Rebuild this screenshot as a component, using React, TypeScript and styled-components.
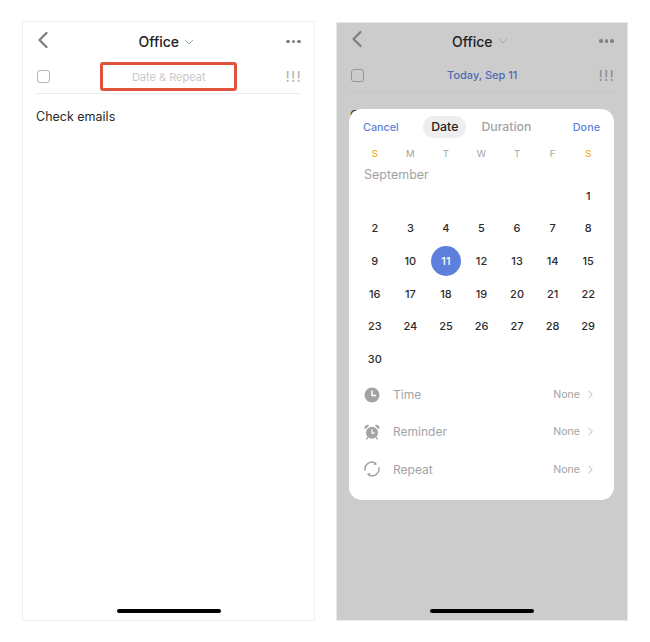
import React from 'react';
import styled, { createGlobalStyle } from 'styled-components';
import { ChevronLeft, ChevronDown, ChevronRight } from 'lucide-react';

const weekdays = ['S', 'M', 'T', 'W', 'T', 'F', 'S'];
const days: (number | null)[] = [
  null, null, null, null, null, null, 1,
  ...Array.from({ length: 29 }, (_, i) => i + 2),
];

const GlobalStyle = createGlobalStyle`
  html, body {
    margin: 0;
    background: #fff;
    font-family: Inter, "Liberation Sans", sans-serif;
  }
`;

function ClockIcon() {
  return (
    <svg width="16" height="16" viewBox="0 0 16 16">
      <circle cx="8" cy="8" r="7.5" fill="#a3a3a3" />
      <path d="M8 3.6V8.4H12" fill="none" stroke="#fff" strokeWidth="1.5" />
    </svg>
  );
}

function AlarmIcon() {
  return (
    <svg width="16" height="16" viewBox="0 0 16 16">
      <circle cx="8" cy="8.8" r="6" fill="#a3a3a3" />
      <path d="M8 5.4V9.2H10.8" fill="none" stroke="#fff" strokeWidth="1.3" />
      <path d="M0.4 4.6C0.2 2.4 2 0.4 4.4 0.8L5 1.8 1.2 5.2Z M15.6 4.6C15.8 2.4 14 0.4 11.6 0.8L11 1.8 14.8 5.2Z" fill="#a3a3a3" />
      <path d="M3.8 13.2 2.6 15.4M12.2 13.2 13.4 15.4" stroke="#a3a3a3" strokeWidth="1.4" />
    </svg>
  );
}

function RepeatIcon() {
  return (
    <svg width="16" height="16" viewBox="0 0 16 16" fill="none">
      <path d="M1.2 9.8A6.9 6.9 0 0 1 11.2 2" stroke="#a3a3a3" strokeWidth="1.5" />
      <path d="M14.8 6.2A6.9 6.9 0 0 1 4.8 14" stroke="#a3a3a3" strokeWidth="1.5" />
      <path d="M10.4 0.4 13.2 3.2 9.8 4.2Z M5.6 15.6 2.8 12.8 6.2 11.8Z" fill="#a3a3a3" />
    </svg>
  );
}

function Header() {
  return (
    <TopBar>
      <BackButton>
        <ChevronLeft size={28} strokeWidth={2} />
      </BackButton>
      <Title>
        Office
        <ChevronDown size={16} strokeWidth={1.4} />
      </Title>
      <Dots>
        <i />
        <i />
        <i />
      </Dots>
    </TopBar>
  );
}

function TaskRow({ children }: { children: React.ReactNode }) {
  return (
    <Row>
      <Checkbox />
      {children}
      <Priority>!!!</Priority>
    </Row>
  );
}

const settings = [
  { label: 'Time', icon: <ClockIcon /> },
  { label: 'Reminder', icon: <AlarmIcon /> },
  { label: 'Repeat', icon: <RepeatIcon /> },
];

export default function App() {
  return (
    <Page>
      <GlobalStyle />
      <Phone>
        <Header />
        <TaskRow>
          <DatePlaceholder>Date &amp; Repeat</DatePlaceholder>
        </TaskRow>
        <TaskText>Check emails</TaskText>
        <HomeBar />
      </Phone>
      <Phone $dimmed>
        <Header />
        <TaskRow>
          <DateValue>Today, Sep 11</DateValue>
        </TaskRow>
        <TaskText>Check emails</TaskText>
        <HomeBar />
        <Sheet>
          <SheetHeader>
            <HeaderLink>Cancel</HeaderLink>
            <Tabs>
              <Tab $active>Date</Tab>
              <Tab>Duration</Tab>
            </Tabs>
            <HeaderLink>Done</HeaderLink>
          </SheetHeader>
          <Weekdays>
            {weekdays.map((d, i) => (
              <Weekday key={i} $weekend={i === 0 || i === 6}>
                {d}
              </Weekday>
            ))}
          </Weekdays>
          <Month>September</Month>
          <Days>
            {days.map((d, i) => (
              <Day key={i}>{d && (d === 11 ? <Selected>{d}</Selected> : d)}</Day>
            ))}
          </Days>
          <Settings>
            {settings.map(s => (
              <Setting key={s.label}>
                <SettingIcon>{s.icon}</SettingIcon>
                <SettingLabel>{s.label}</SettingLabel>
                <SettingValue>None</SettingValue>
                <ChevronRight size={13} strokeWidth={1.6} color="#a8a8a8" />
              </Setting>
            ))}
          </Settings>
        </Sheet>
      </Phone>
    </Page>
  );
}

const Page = styled.div`
  display: flex;
  align-items: center;
  gap: 21px;
  width: 650px;
  height: 642px;
  padding-left: 22px;
  box-sizing: border-box;
`;

const Phone = styled.div<{ $dimmed?: boolean }>`
  position: relative;
  display: flex;
  flex-direction: column;
  box-sizing: border-box;
  overflow: hidden;
  width: ${p => (p.$dimmed ? '292px' : '293px')};
  height: ${p => (p.$dimmed ? '599px' : '600px')};
  padding: 0 13px;
  background: ${p => (p.$dimmed ? '#cccccc' : '#fff')};
  border: 1px solid ${p => (p.$dimmed ? '#e8e8e8' : '#efefef')};
`;

const TopBar = styled.div`
  display: flex;
  align-items: center;
  justify-content: space-between;
  height: 37px;
  padding-top: 1px;
  box-sizing: content-box;
  ${Phone}:last-child & {
    margin-top: -1px;
  }
`;

const BackButton = styled.div`
  display: flex;
  margin-left: -7px;
  margin-top: -4px;
  color: #808080;
`;

const Title = styled.div`
  display: flex;
  align-items: center;
  gap: 2px;
  margin-left: -8px;
  font-size: 14px;
  font-weight: 500;
  color: #222;
  svg {
    color: #a3a3a3;
  }
`;

const Dots = styled.div`
  display: flex;
  gap: 2px;
  i {
    width: 3.5px;
    height: 3.5px;
    border-radius: 50%;
    background: #808080;
  }
`;

const Row = styled.div`
  display: flex;
  align-items: center;
  justify-content: space-between;
  height: 33px;
  border-bottom: 1px solid #ececec;
  ${Phone}:last-child & {
    padding-bottom: 1px;
    box-sizing: border-box;
    border-bottom-color: #c4c4c4;
  }
`;

const Checkbox = styled.div`
  width: 13px;
  height: 13px;
  box-sizing: border-box;
  margin-left: 1px;
  border: 1.3px solid #b4b4b4;
  border-radius: 3px;
  ${Phone}:last-child & {
    border-color: #969696;
  }
`;

const Priority = styled.div`
  margin-right: -1px;
  font-size: 15px;
  letter-spacing: 1.2px;
  color: #b4b4b4;
  ${Phone}:last-child & {
    color: #8c8c8c;
  }
`;

const DatePlaceholder = styled.div`
  display: flex;
  align-items: center;
  justify-content: center;
  box-sizing: border-box;
  width: 137px;
  height: 29px;
  margin-left: 2px;
  font-size: 11px;
  color: #c9c9c9;
  border: 3px solid #e0533d;
  border-radius: 3px;
`;

const DateValue = styled.div`
  margin-left: 2px;
  font-size: 11px;
  font-weight: 500;
  color: #4f68b8;
`;

const TaskText = styled.div`
  margin-top: 14px;
  font-size: 12.5px;
  line-height: 18px;
  color: #2a2a2a;
`;

const HomeBar = styled.div`
  width: 104px;
  height: 4px;
  margin: auto auto 7px;
  border-radius: 2px;
  background: #000;
`;

const Sheet = styled.div`
  position: absolute;
  left: 12px;
  top: 86px;
  width: 265px;
  height: 391px;
  box-sizing: border-box;
  padding: 0 8px;
  background: #fff;
  border-radius: 13px;
`;

const SheetHeader = styled.div`
  display: flex;
  align-items: center;
  justify-content: space-between;
  height: 33px;
  padding: 2px 6px 0;
`;

const HeaderLink = styled.div`
  font-size: 10.8px;
  font-weight: 500;
  color: #5f7fdd;
  margin-top: 1px;
`;

const Tabs = styled.div`
  display: flex;
  align-items: center;
  gap: 15px;
  margin-left: 9px;
  margin-right: 18px;
`;

const Tab = styled.div<{ $active?: boolean }>`
  padding: 0 8px;
  line-height: 22px;
  border-radius: 11px;
  font-size: 12.3px;
  font-weight: 500;
  margin-left: ${p => (p.$active ? '0' : '-8px')};
  color: ${p => (p.$active ? '#222' : '#a3a3a3')};
  background: ${p => (p.$active ? '#eeeeee' : 'transparent')};
`;

const Weekdays = styled.div`
  display: grid;
  grid-template-columns: repeat(7, 1fr);
  height: 20px;
  align-items: center;
`;

const Weekday = styled.div<{ $weekend?: boolean }>`
  text-align: center;
  font-size: 9.5px;
  font-weight: ${p => (p.$weekend ? 500 : 400)};
  color: ${p => (p.$weekend ? '#f5b32c' : '#a3a3a3')};
`;

const Month = styled.div`
  margin: 3px 0 0 7px;
  height: 16px;
  line-height: 16px;
  font-size: 12.5px;
  color: #a3a3a3;
`;

const Days = styled.div`
  display: grid;
  grid-template-columns: repeat(7, 1fr);
  grid-auto-rows: 32.6px;
  margin-top: -3px;
`;

const Day = styled.div`
  display: flex;
  align-items: center;
  justify-content: center;
  font-size: 11px;
  font-weight: 500;
  color: #2b2b2b;
`;

const Selected = styled.div`
  display: flex;
  align-items: center;
  justify-content: center;
  width: 30px;
  height: 30px;
  border-radius: 50%;
  background: #5f7fdd;
  color: #fff;
`;

const Settings = styled.div`
  display: flex;
  flex-direction: column;
  margin-top: 1px;
`;

const Setting = styled.div`
  display: flex;
  align-items: center;
  height: 37.2px;
  padding: 0 9px 0 7px;
`;

const SettingIcon = styled.div`
  display: flex;
  width: 29px;
`;

const SettingLabel = styled.div`
  flex: 1;
  font-size: 12px;
  color: #a3a3a3;
`;

const SettingValue = styled.div`
  margin-right: 4px;
  font-size: 10.6px;
  color: #a3a3a3;
`;
